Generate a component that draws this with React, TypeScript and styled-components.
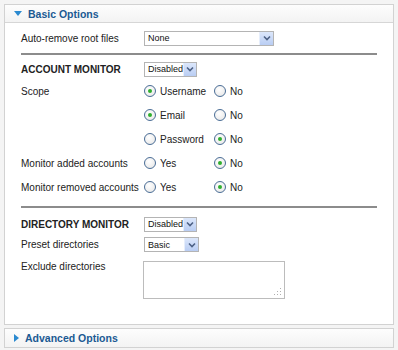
import React from "react";
import styled, { createGlobalStyle } from "styled-components";

const Global = createGlobalStyle`
  html, body { margin: 0; padding: 0; background: #f4f4f4; }
  body { font-family: "Liberation Sans", Arial, sans-serif; font-size: 10px; color: #222; }
  * { box-sizing: border-box; }
`;

const Page = styled.div`
  width: 398px;
  height: 350px;
  padding: 4px 4px 0 4px;
  display: flex;
  flex-direction: column;
  gap: 3px;
`;

const Panel = styled.section`
  border: 1px solid #d2d2d2;
  background: #fff;
  width: 390px;
`;

const PanelHeader = styled.div<{ $open?: boolean }>`
  height: 18px;
  display: flex;
  align-items: center;
  gap: 6px;
  padding-left: 9px;
  background: linear-gradient(#fdfdfd, #f3f3f3);
  border-bottom: ${(p) => (p.$open ? "1px solid #d6d6d6" : "none")};
  color: #1b5a93;
  font-weight: bold;
  font-size: 10.5px;
`;

const Arrow = styled.span<{ $open?: boolean }>`
  width: 0;
  height: 0;
  ${(p) =>
    p.$open
      ? `border-left: 4px solid transparent; border-right: 4px solid transparent; border-top: 5px solid #2b8ad0;`
      : `border-top: 4px solid transparent; border-bottom: 4px solid transparent; border-left: 5px solid #2b8ad0;`}
`;

const Body = styled.div`
  padding: 5px 16px 0 16px;
  height: 301px;
`;

const Row = styled.div<{ $h?: number; $top?: boolean }>`
  display: grid;
  grid-template-columns: 123px auto;
  align-items: ${(p) => (p.$top ? "start" : "center")};
  padding-top: ${(p) => (p.$top ? 6 : 0)}px;
  height: ${(p) => p.$h ?? 24}px;
`;

const Label = styled.div<{ $bold?: boolean }>`
  font-weight: ${(p) => (p.$bold ? "bold" : "normal")};
  color: #222;
  white-space: nowrap;
`;

const Separator = styled.hr<{ $mt: number; $mb: number }>`
  border: none;
  border-top: 2px solid #8c8c8c;
  margin: ${(p) => p.$mt}px 0 ${(p) => p.$mb}px 0;
  width: 356px;
`;

const SelectBox = styled.div<{ $w: number }>`
  width: ${(p) => p.$w}px;
  height: 15px;
  border: 1px solid #b4b4b4;
  background: #fff;
  display: flex;
  align-items: center;
  justify-content: space-between;
  padding-left: 3px;
  font-size: 9px;
  color: #111;
`;

const SelectButton = styled.span`
  width: 14px;
  height: 13px;
  background: linear-gradient(#dce7fb, #b9cdf3);
  border-left: 1px solid #e6eefc;
  display: flex;
  align-items: center;
  justify-content: center;
`;

const Select = ({ value, width }: { value: string; width: number }) => (
  <SelectBox $w={width}>
    <span>{value}</span>
    <SelectButton>
      <svg width="8" height="6" viewBox="0 0 8 6">
        <path d="M1 1.5 L4 4.5 L7 1.5" stroke="#4d6185" strokeWidth="1.6" fill="none" />
      </svg>
    </SelectButton>
  </SelectBox>
);

const Options = styled.div`
  display: flex;
  align-items: center;
`;

const Option = styled.label<{ $w?: number }>`
  display: flex;
  align-items: center;
  gap: 4px;
  width: ${(p) => (p.$w ? `${p.$w}px` : "auto")};
  color: #222;
`;

const Radio = styled.span<{ $on?: boolean }>`
  width: 12px;
  height: 12px;
  border-radius: 50%;
  border: 1px solid #4a6d96;
  background: radial-gradient(circle at 40% 35%, #ffffff, #e4e4e4);
  display: flex;
  align-items: center;
  justify-content: center;
  &::after {
    content: "";
    width: 4px;
    height: 4px;
    border-radius: 50%;
    background: ${(p) => (p.$on ? "#2fae2f" : "transparent")};
  }
`;

const Textarea = styled.div`
  width: 142px;
  height: 38px;
  border: 1px solid #bcbcbc;
  background: #fff;
  position: relative;
  margin-left: -1px;
`;

const Grip = styled.svg`
  position: absolute;
  right: 2px;
  bottom: 2px;
`;

const Pair = ({ a, b, on }: { a: string; b: string; on: 0 | 1 }) => (
  <Options>
    <Option $w={70}>
      <Radio $on={on === 0} />
      {a}
    </Option>
    <Option>
      <Radio $on={on === 1} />
      {b}
    </Option>
  </Options>
);

export default function App() {
  return (
    <>
      <Global />
      <Page>
        <Panel>
          <PanelHeader $open>
            <Arrow $open />
            Basic Options
          </PanelHeader>
          <Body>
            <Row $h={20}>
              <Label>Auto-remove root files</Label>
              <Select value="None" width={130} />
            </Row>
            <Separator $mt={5} $mb={4} />
            <Row $h={20}>
              <Label $bold>ACCOUNT MONITOR</Label>
              <Select value="Disabled" width={53} />
            </Row>
            <Row $h={24}>
              <Label>Scope</Label>
              <Pair a="Username" b="No" on={0} />
            </Row>
            <Row>
              <Label />
              <Pair a="Email" b="No" on={0} />
            </Row>
            <Row>
              <Label />
              <Pair a="Password" b="No" on={1} />
            </Row>
            <Row>
              <Label>Monitor added accounts</Label>
              <Pair a="Yes" b="No" on={1} />
            </Row>
            <Row>
              <Label>Monitor removed accounts</Label>
              <Pair a="Yes" b="No" on={1} />
            </Row>
            <Separator $mt={7} $mb={6} />
            <Row $h={20}>
              <Label $bold>DIRECTORY MONITOR</Label>
              <Select value="Disabled" width={53} />
            </Row>
            <Row $h={21}>
              <Label>Preset directories</Label>
              <Select value="Basic" width={55} />
            </Row>
            <Row $h={46} $top>
              <Label>Exclude directories</Label>
              <Textarea>
                <Grip width="8" height="8" viewBox="0 0 8 8">
                  <g fill="#b0b0b0">
                    <rect x="6" y="0" width="1" height="1" />
                    <rect x="3" y="3" width="1" height="1" />
                    <rect x="6" y="3" width="1" height="1" />
                    <rect x="0" y="6" width="1" height="1" />
                    <rect x="3" y="6" width="1" height="1" />
                    <rect x="6" y="6" width="1" height="1" />
                  </g>
                </Grip>
              </Textarea>
            </Row>
          </Body>
        </Panel>
        <Panel>
          <PanelHeader>
            <Arrow />
            Advanced Options
          </PanelHeader>
        </Panel>
      </Page>
    </>
  );
}
